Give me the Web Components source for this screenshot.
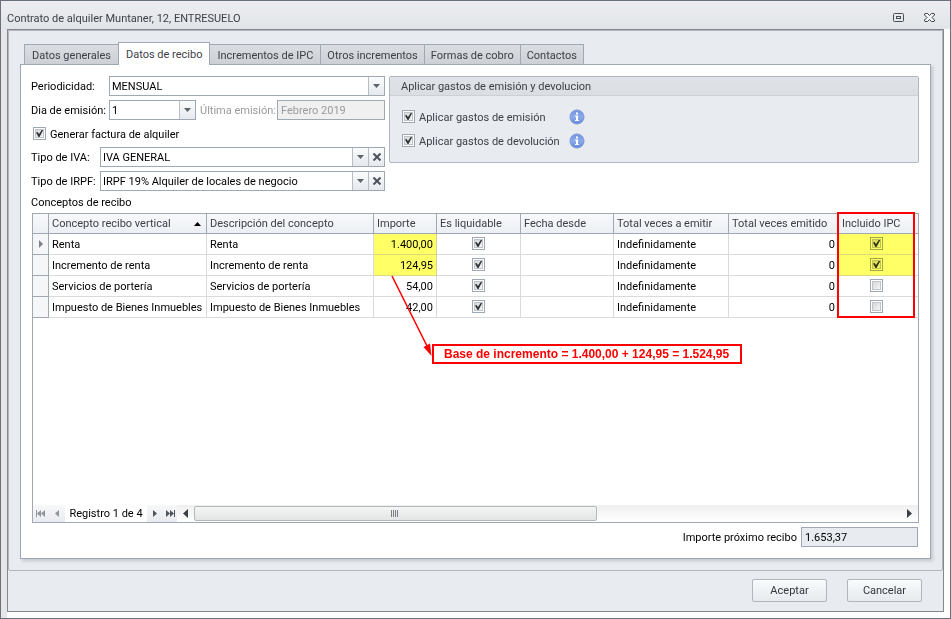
<!DOCTYPE html>
<html lang="es">
<head>
<meta charset="utf-8">
<title>Contrato de alquiler</title>
<style>
html, body { margin: 0; height: 100%; }
body {
  font: 11px/16px Roboto, "Liberation Sans", sans-serif; color: #000;
  --line: #a0a8b4; --soft: #d8dade; --panel: #e8ebf0; --dim: #3c4048;
  display: flex; flex-direction: column;
}
</style>
</head>
<body>
<app-window heading="Contrato de alquiler Muntaner, 12, ENTRESUELO">
  <tab-panel tabs="Datos generales|Datos de recibo|Incrementos de IPC|Otros incrementos|Formas de cobro|Contactos" active="1">
    <receipt-form></receipt-form>
    <data-grid></data-grid>
    <total-field label="Importe próximo recibo" value="1.653,37"></total-field>
  </tab-panel>
  <push-button slot="actions">Aceptar</push-button>
  <push-button slot="actions">Cancelar</push-button>
</app-window>

<script>
const BASE = `<style>
*, *::before { box-sizing: border-box; }
button, input, select { font: inherit; color: inherit; margin: 0; padding: 0; }
button { display: grid; place-items: center; border: 0; background: none; }
svg { display: block; }
</style>`;

const define = (name, render) => customElements.define(name, class extends HTMLElement {
  connectedCallback() {
    if (this.shadowRoot) return;
    this.attachShadow({ mode: 'open' }).innerHTML = BASE + render(this);
  }
});

define('app-window', el => `<style>
:host { flex: 1; display: flex; flex-direction: column; border: 1px solid #6b7080; background: linear-gradient(90deg, #e6e6e9 6px, #fdfdfe 6px); }
header { display: flex; align-items: center; height: 28px; padding: 4px 14px 0 6px; color: var(--dim); background: linear-gradient(#ededf1, #e1e5e8); }
h1 { flex: 1; margin: 0; padding-top: 4px; font: inherit; }
.tools { display: flex; gap: 18px; }
.tools button { width: 13px; height: 11px; }
main { flex: 1; display: flex; flex-direction: column; margin: 0 6px 6px; border: 1px solid #82888e; background: var(--panel); }
.body { flex: 1; display: flex; flex-direction: column; padding: 11px; border: 1px solid #b1b5bc; border-radius: 0 0 2px 2px; }
footer { display: flex; justify-content: flex-end; gap: 20px; padding: 8px 21px 9px; }
</style>
<header><h1>${el.getAttribute('heading')}</h1>
<div class="tools">
<button aria-label="Maximizar"><svg width="13" height="11" fill="none" stroke="#484e56"><rect x="1.5" y="1.5" width="10" height="8" rx="1"/><rect x="4.500" y="4.500" width="4" height="2"/></svg></button>
<button aria-label="Cerrar"><svg width="13" height="11" fill="#f4f5f7" stroke="#3c4248"><path d="M2 1.500H4.500L6.500 3.500L8.500 1.500H11L11.500 2V3L9 5.500L11.500 8V9L11 9.500H8.500L6.500 7.500L4.500 9.500H2L1.500 9V8L4 5.500L1.500 3V2Z"/></svg></button>
</div></header>
<main><div class="body"><slot></slot></div><footer><slot name="actions"></slot></footer></main>`);

define('push-button', () => `<style>
:host { display: block; }
button { width: 75px; height: 23px; padding-top: 1px; border: 1px solid #b0b6be; border-radius: 2px; color: #32363c; background: linear-gradient(#f9fbfc, #e6eaee); }
</style><button type="button"><slot></slot></button>`);

define('tab-panel', el => {
  const active = +el.getAttribute('active');
  return `<style>
:host { flex: 1; display: flex; flex-direction: column; }
nav { display: flex; align-items: flex-end; padding-left: 4px; }
button { height: 20px; padding: 2px 7px 0; border: 1px solid var(--line); border-bottom: 0; margin-right: -1px; color: var(--dim); background: linear-gradient(#dadee3, #cdd1d6); white-space: nowrap; }
button:nth-child(n+4) { padding: 2px 6px 0; }
button[aria-selected=true] { height: 23px; margin-bottom: -1px; padding-bottom: 1px; background: #fff; z-index: 1; }
section { flex: 1; display: flex; flex-direction: column; padding: 11px 11px 11px 10px; border: 1px solid var(--line); background: #fff; box-shadow: 2px 2px 3px #c3c8d0; }
</style>
<nav role="tablist">${el.getAttribute('tabs').split('|').map((t, i) => `<button role="tab" aria-selected="${i === active}">${t}</button>`).join('')}</nav>
<section role="tabpanel"><slot></slot></section>`;
});

const CHECK = `<style>
input[type=checkbox] { appearance: none; flex: none; display: block; width: 13px; height: 13px; border: 1px solid var(--line); background:
  linear-gradient(135deg, #d4d6d9, #f6f6f6) 2px 2px / 7px 7px no-repeat, #fff; outline: 1px solid #c0c4c8; outline-offset: -3px; }
input[type=checkbox]:checked { background:
  url("data:image/svg+xml,%3Csvg xmlns='http://www.w3.org/2000/svg' width='11' height='11'%3E%3Cpath d='M2 4.500L3.500 4L5 6L8 1.500H9.500L5.500 9H4.500Z' fill='%23303438'/%3E%3C/svg%3E") 0 0 no-repeat,
  linear-gradient(135deg, #d4d6d9, #f6f6f6) 2px 2px / 7px 7px no-repeat, #fff; }
</style>`;

define('check-box', el => CHECK + `<style>
:host { display: block; }
label { display: flex; align-items: flex-start; gap: 4px; }
input { margin-top: 1px !important; }
span { padding-top: 1px; }
</style><label><input type="checkbox" checked><span><slot></slot></span></label>`);

define('combo-field', el => `<style>
:host { display: flex; align-items: center; height: 20px; }
label { flex: none; width: var(--label, 78px); padding-top: 1px; }
.box { flex: 1; min-width: 0; height: 20px; display: grid; grid-template-columns: 1fr auto auto; border: 1px solid var(--line); background: #fff; }
select { appearance: none; grid-area: 1 / 1 / 2 / 3; border: 0; padding: 2px 18px 0 2px; background: none; min-width: 0; width: 100%; height: 18px; }
.cell { width: 16px; height: 18px; display: grid; place-items: center; border-left: 1px solid #b8bec6; background: linear-gradient(#fafbfc, #e6eaee); }
.arrow { grid-area: 1 / 2; pointer-events: none; }
</style>
<label for="c">${el.getAttribute('label')}</label>
<div class="box"><select id="c"><option>${el.getAttribute('value')}</option></select>
<span class="cell arrow"><svg width="7" height="4"><path d="M0 0H7L3.500 4Z" fill="#5c636b"/></svg></span>
${el.hasAttribute('clearable') ? '<button class="cell" aria-label="Borrar"><svg width="10" height="8"><path d="M1.500 .5L8.500 7.500M8.500 .5L1.500 7.500" stroke="#4a5058" stroke-width="2"/></svg></button>' : ''}
</div>`);

define('info-icon', () => `<style>:host { display: block; }</style>
<svg width="16" height="16" role="img" aria-label="Información"><defs><linearGradient id="g" x2="0" y2="1"><stop stop-color="#6f95e0"/><stop offset=".5" stop-color="#8cabeb"/><stop offset="1" stop-color="#5f86d6"/></linearGradient></defs>
<circle cx="8" cy="8" r="7" fill="url(#g)" stroke="#7c98d4"/><path d="M7 3.500H9V5.500H7ZM6 6.500H9V11H10V12H6V11H7V7.500H6Z" fill="#fff"/></svg>`);

define('receipt-form', () => `<style>
:host { display: flex; gap: 4px; align-items: flex-start; }
.fields { flex: none; width: 354px; display: flex; flex-direction: column; gap: 4px; }
.row { display: flex; gap: 4px; }
.day { width: 165px; }
.last { flex: 1; display: flex; align-items: center; color: #9a9a9a; }
.last label { flex: 1; padding-top: 1px; }
.last input { width: 108px; height: 20px; padding: 1px 3px 0; border: 1px solid var(--line); background: #f0f0f0; }
.make { height: 19px; padding: 2px 0 0 2px; }
.narrow { --label: 69px; }
fieldset { flex: 1; min-width: 0; height: 87px; margin: 0; padding: 0; border: 1px solid #b0b6c2; border-radius: 2px; background: var(--panel); color: var(--dim); }
h2 { margin: 0; height: 19px; padding: 2px 11px 0; font: inherit; border-bottom: 1px solid #cdd1d7; background: linear-gradient(#e0e4e8, #dadde2); }
.opts { display: grid; grid-template-columns: 167px 16px; gap: 7px 0; padding: 13px 12px; }
</style>
<div class="fields">
<combo-field label="Periodicidad:" value="MENSUAL"></combo-field>
<div class="row"><combo-field class="day" label="Dia de emisión:" value="1"></combo-field>
<div class="last"><label for="u">Última emisión:</label><input id="u" value="Febrero 2019" disabled></div></div>
<div class="make"><check-box>Generar factura de alquiler</check-box></div>
<combo-field class="narrow" label="Tipo de IVA:" value="IVA GENERAL" clearable></combo-field>
<combo-field class="narrow" label="Tipo de IRPF:" value="IRPF 19% Alquiler de locales de negocio" clearable></combo-field>
</div>
<fieldset aria-labelledby="h"><h2 id="h">Aplicar gastos de emisión y devolucion</h2>
<div class="opts"><check-box>Aplicar gastos de emisión</check-box><info-icon></info-icon>
<check-box>Aplicar gastos de devolución</check-box><info-icon></info-icon></div></fieldset>`);

const ROWS = [
  ['Renta', '1.400,00', true],
  ['Incremento de renta', '124,95', true],
  ['Servicios de portería', '54,00', false],
  ['Impuesto de Bienes Inmuebles', '42,00', false],
];
const COLS = ['Descripción del concepto', 'Importe', 'Es liquidable', 'Fecha desde', 'Total veces a emitir', 'Total veces emitido', 'Incluido IPC'];

define('data-grid', () => CHECK + `<style>
:host { flex: 1; display: flex; flex-direction: column; }
h2 { margin: 0; padding: 4px 0 0; font: inherit; height: 22px; }
.frame { flex: 1; position: relative; display: flex; flex-direction: column; justify-content: space-between; margin-left: 1px; border: 1px solid var(--line); }
table { width: 100%; table-layout: fixed; border-collapse: separate; border-spacing: 0; }
th, td { height: 21px; padding: 2px 3px 0; text-align: left; font-weight: normal; white-space: nowrap; border: solid var(--soft); border-width: 0 1px 1px 0; line-height: 16px; }
th { height: 20px; padding: 0 3px; color: var(--dim); border-color: var(--line); background: linear-gradient(#f8f9fb, #eceff3); }
th:first-child, td:first-child { padding: 0; border-color: var(--line); }
td:first-child { background: #f5f6f8; }
th:last-child, td:last-child { border-right: 0; padding: 0; }
.sort { display: flex; justify-content: space-between; align-items: center; padding-right: 2px; }
.num { text-align: right; }
.mark { background: #ff6; border-right-color: #d2d292; border-bottom-color: #dcdc78; }
td input { margin: 0 auto 3px !important; }
.mark input.soft { mix-blend-mode: multiply; }
td svg { margin: 0 auto; }
.bar { display: flex; align-items: stretch; height: 17px; }
.nav { display: flex; align-items: stretch; background: linear-gradient(#f7f8fa, #e8ebef); }
.nav button { width: 16px; }
.pos { padding: 1px 0 0; width: 82px; text-align: center; }
.pos + .nav button { width: 15px; }
.scroll { flex: 1; display: grid; grid-template-columns: 17px 1fr 17px; background: linear-gradient(#efefef, #fff); }
.thumb { width: 57%; margin: 1px 0; display: grid; place-items: center; border: 1px solid #b4b8bc; border-radius: 2px; background: linear-gradient(#f3f5f5, #e4e6e6); }
.ring { position: absolute; left: 804px; top: -2px; width: 78px; height: 106px; border: 2px solid #f00; }
.arrow { position: absolute; left: 355px; top: 60px; }
.note { position: absolute; left: 399px; top: 130px; height: 20px; padding: 0 11px 0 10px; border: 2px solid #f00; color: #f00; font: bold 12px/16px "Liberation Sans", Arial, sans-serif; white-space: nowrap; }
</style>
<h2>Conceptos de recibo</h2>
<div class="frame">
<table>
<colgroup>${[16, 158, 167, 63, 84, 93, 115, 110, 76].map(w => `<col style="width:${w}px">`).join('')}<col></colgroup>
<thead><tr><th></th><th><span class="sort">Concepto recibo vertical<svg width="7" height="4"><path d="M0 4H7L3.500 0Z" fill="#000"/></svg></span></th>${COLS.map(c => `<th>${c}</th>`).join('')}<th></th></tr></thead>
<tbody>${ROWS.map(([name, amount, ipc], i) => `<tr>
<td>${i ? '' : '<svg width="4" height="8"><path d="M0 0L4 4L0 8Z" fill="#7c828c"/></svg>'}</td>
<td>${name}</td><td>${name}</td><td class="num ${ipc ? 'mark' : ''}">${amount}</td>
<td><input type="checkbox" checked aria-label="Es liquidable, ${name}"></td><td></td>
<td>Indefinidamente</td><td class="num">0</td>
<td class="${ipc ? 'mark' : ''}"><input class="soft" type="checkbox" ${ipc ? 'checked' : ''} aria-label="Incluido IPC, ${name}"></td><td></td></tr>`).join('')}</tbody>
</table>
<div class="bar">
<div class="nav">
<button aria-label="Primero"><svg width="10" height="7" fill="#8f959b"><path d="M0 0H1V7H0ZM5 0V7L1 3.500ZM9 0V7L5 3.500Z"/></svg></button>
<button aria-label="Anterior"><svg width="4" height="7" fill="#8f959b"><path d="M4 0V7L0 3.500Z"/></svg></button></div>
<div class="pos">Registro 1 de 4</div>
<div class="nav">
<button aria-label="Siguiente"><svg width="4" height="7" fill="#50565e"><path d="M0 0V7L4 3.500Z"/></svg></button>
<button aria-label="Último"><svg width="10" height="7" fill="#50565e"><path d="M9 0H10V7H9ZM1 0V7L5 3.500ZM5 0V7L9 3.500Z"/></svg></button></div>
<div class="scroll">
<button aria-label="Desplazar a la izquierda"><svg width="5" height="9" fill="#3c4046"><path d="M5 0V9L0 4.500Z"/></svg></button>
<div class="thumb"><svg width="8" height="7"><path d="M.5 0V7M2.500 0V7M4.500 0V7M6.500 0V7" stroke="#7a7e82"/></svg></div>
<button aria-label="Desplazar a la derecha"><svg width="5" height="9" fill="#3c4046"><path d="M0 0V9L5 4.500Z"/></svg></button>
</div></div>
<div class="ring"></div>
<svg class="arrow" width="48" height="86"><path d="M4 2L40 74" stroke="#f00" stroke-width="1.500"/><path d="M43.500 82L35.500 73L42 69.500Z" fill="#f00"/></svg>
<div class="note">Base de incremento = 1.400,00 + 124,95 = 1.524,95</div>
</div>`);

define('total-field', el => `<style>
:host { display: flex; justify-content: flex-end; align-items: center; gap: 4px; padding: 4px 1px 0 0; }
label { padding-top: 1px; }
input { width: 117px; height: 20px; padding: 1px 3px 0; border: 1px solid var(--line); background: var(--panel); }
</style><label for="t">${el.getAttribute('label')}</label><input id="t" readonly value="${el.getAttribute('value')}">`);
</script>
</body>
</html>
